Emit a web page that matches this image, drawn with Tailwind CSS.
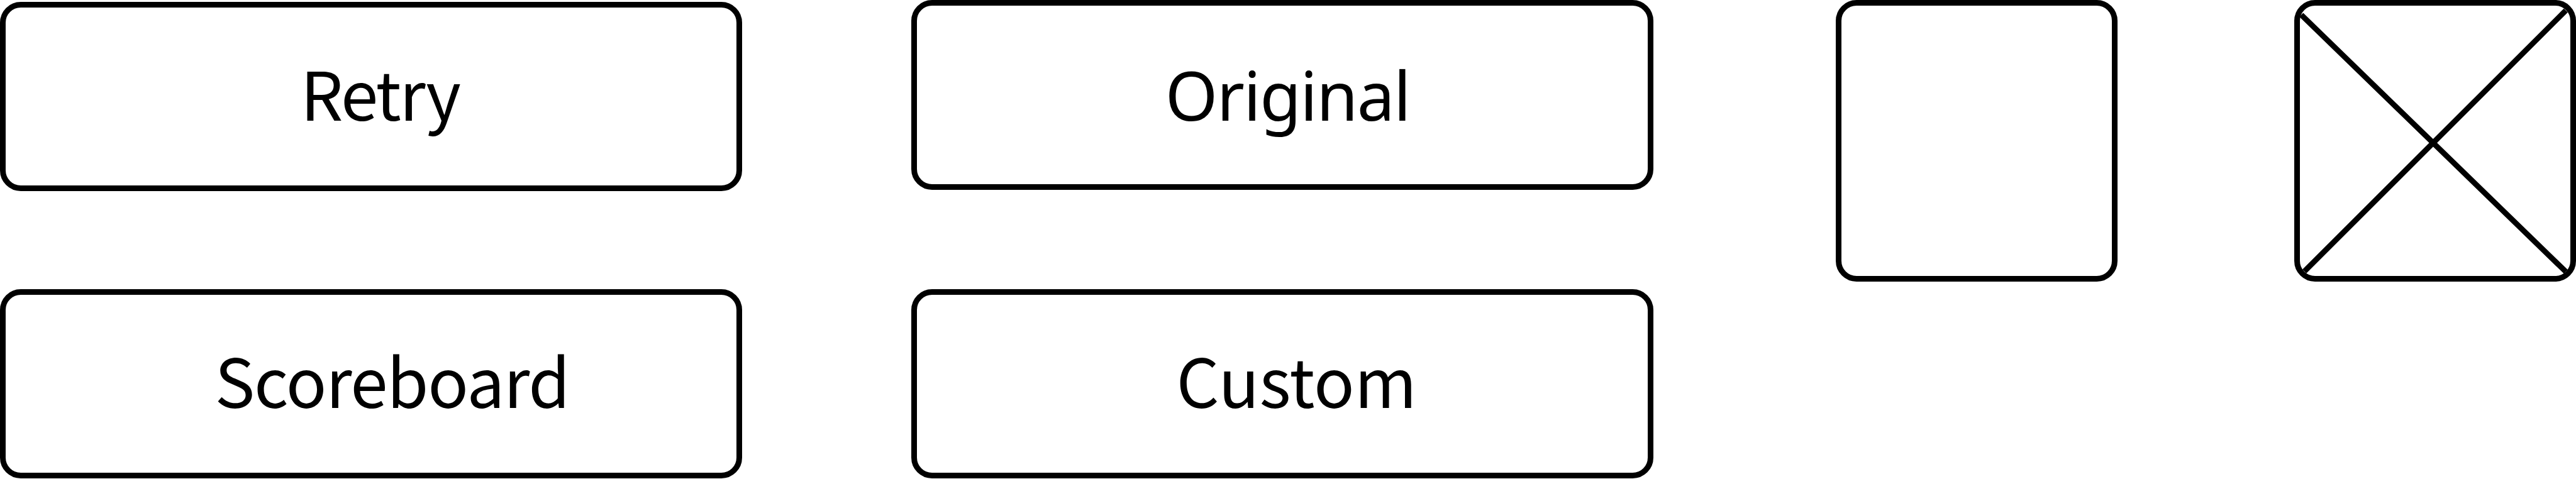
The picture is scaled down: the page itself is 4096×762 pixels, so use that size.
<!DOCTYPE html>
<html lang="en">
<head>
<meta charset="utf-8">
<title>Menu buttons</title>
<script src="https://cdn.jsdelivr.net/npm/@tailwindcss/browser@4"></script>
</head>
<body class="h-[762px] w-[4096px] overflow-hidden bg-white font-['Noto_Sans_CJK_SC','Noto_Sans',sans-serif] text-[107px] leading-[155px] text-black">
<main class="flex h-full items-start">
  <section class="flex w-[1180px] flex-col gap-[156px] pt-[3px]">
    <button class="h-[301px] rounded-[33px] border-[9px] border-black pt-[56px] pl-[468.8px] flex items-start tracking-[-2.6px]">Retry</button>
    <button class="h-[301px] rounded-[33px] border-[9px] border-black pt-[56px] pl-[332.4px] flex items-start tracking-[-1.25px]">Scoreboard</button>
  </section>
  <section class="ml-[269px] flex w-[1180px] flex-col gap-[158px]">
    <button class="h-[302px] rounded-[33px] border-[9px] border-black pt-[64px] pl-[394.8px] flex items-start font-['Noto_Sans',sans-serif] tracking-[-1.66px]">Original</button>
    <button class="h-[301px] rounded-[33px] border-[9px] border-black pt-[56px] pl-[412.4px] flex items-start">Custom</button>
  </section>
  <div class="ml-[290px] size-[448px] rounded-[33px] border-[9px] border-black"></div>
  <div class="relative ml-[281px] size-[448px] rounded-[33px] border-[9px] border-black">
    <svg class="absolute -top-[9px] -left-[9px] size-[448px]" viewBox="0 0 448 448" fill="none" stroke="black" stroke-width="8.8">
      <path d="M11.2 23.6 431.8 432.2M16.2 431.6 431.8 16.6"/>
    </svg>
  </div>
</main>
</body>
</html>
